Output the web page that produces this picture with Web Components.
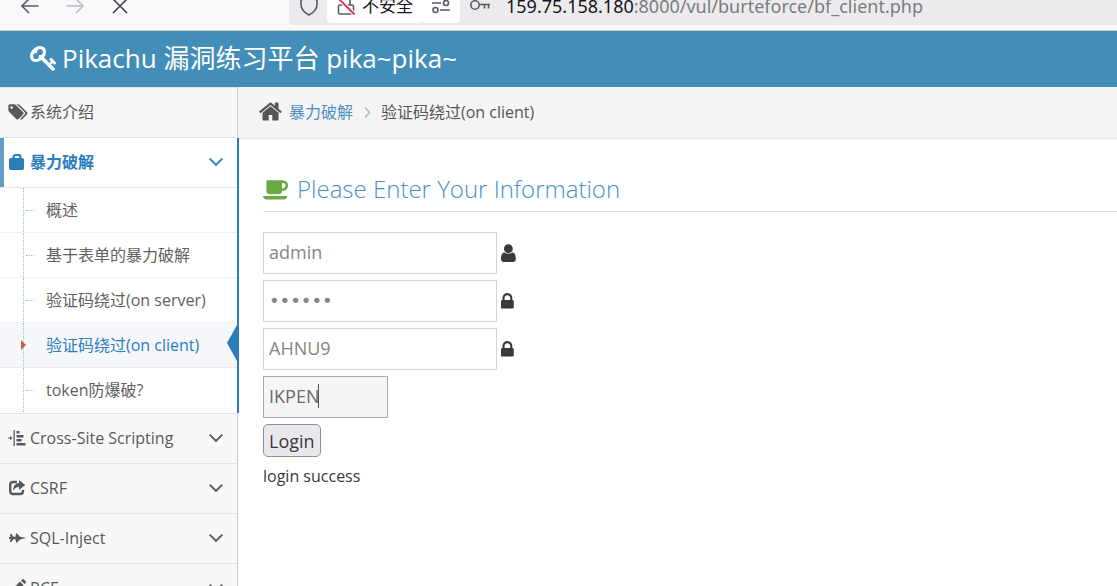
<!DOCTYPE html>
<html lang="zh-CN">
<head>
<meta charset="utf-8">
<title>Pikachu 漏洞练习平台 pika~pika~</title>
<style>
html,body{margin:0;height:100%}
body{overflow:hidden;background:#fff;color:#393939;font:16px/24px "Open Sans","Noto Sans CJK SC",sans-serif}
</style>
</head>
<body>
<pika-app></pika-app>
<script>
const ICONS = {
  key:['0 0 1792 1792','<path d="M832 512q0-80-56-136t-136-56-136 56-56 136q0 42 19 83-41-19-83-19-80 0-136 56t-56 136 56 136 136 56 136-56 56-136q0-42-19-83 41 19 83 19 80 0 136-56t56-136zm851 704q0 17-49 66t-66 49q-9 0-28.500-16t-36.500-33-38.500-40-24.500-26l-96 96 220 220q28 28 28 68 0 42-39 81t-81 39q-40 0-68-28l-671-671q-176 131-365 131-163 0-265.500-102.500t-102.500-265.500q0-160 95-313t248-248 313-95q163 0 265.500 102.500t102.500 265.500q0 189-131 365l355 355 96-96q-3-3-26-24.500t-40-38.500-33-36.500-16-28.500q0-17 49-66t66-49q13 0 23 10 6 6 46 44.500t82 79.500 86.500 86 73 78 28.500 41z"/>'],
  tags:['0 0 1920 1792','<path d="M384 448q0-53-37.500-90.500t-90.500-37.500-90.500 37.500-37.500 90.500 37.500 90.500 90.500 37.500 90.500-37.500 37.500-90.500zm1067 576q0 53-37 90l-491 492q-39 37-91 37-53 0-90-37l-715-716q-38-37-64.500-101t-26.500-117v-416q0-52 38-90t90-38h416q53 0 117 26.500t102 64.500l715 714q37 39 37 91zm384 0q0 53-37 90l-491 492q-39 37-91 37-36 0-59-14t-53-45l470-470q37-37 37-90 0-52-37-91l-715-714q-38-38-102-64.500t-117-26.500h224q53 0 117 26.500t102 64.500l715 714q37 39 37 91z"/>'],
  home:['0 0 1792 1792','<path d="M1472 992v480q0 26-19 45t-45 19h-384v-384h-256v384h-384q-26 0-45-19t-19-45v-480q0-1 .5-3t.5-3l575-474 575 474q1 2 1 6zm223-69l-62 74q-8 9-21 11h-3q-13 0-21-7l-692-577-692 577q-12 8-24 7-13-2-21-11l-62-74q-8-10-7-23.500t11-21.500l719-599q32-26 76-26t76 26l244 204v-195q0-14 9-23t23-9h192q14 0 23 9t9 23v408l219 182q10 8 11 21.500t-7 23.500z"/>'],
  coffee:['0 0 1920 1792','<path d="M1664 640q0-80-56-136t-136-56h-64v384h64q80 0 136-56t56-136zm-1664 768h1792q0 106-75 181t-181 75h-1280q-106 0-181-75t-75-181zm1856-768q0 159-112.500 271.500t-271.500 112.500h-64v32q0 92-66 158t-158 66h-704q-92 0-158-66t-66-158v-736q0-26 19-45t45-19h1152q159 0 271.500 112.500t112.500 271.500z"/>'],
  user:['256 192 1280 1472','<path d="M1536 1399q0 109-62.500 187t-150.500 78h-854q-88 0-150.500-78t-62.500-187q0-85 8.500-160.500t31.500-152 58.500-131 94-89 134.500-34.500q131 128 313 128t313-128q76 0 134.500 34.500t94 89 58.500 131 31.500 152 8.500 160.500zm-256-887q0 159-112.500 271.500t-271.500 112.500-271.500-112.500-112.500-271.500 112.500-271.500 271.500-112.500 271.500 112.500 112.500 271.500z"/>'],
  lock:['320 128 1152 1536','<path d="M640 768h512v-192q0-106-75-181t-181-75-181 75-75 181v192zm832 96v576q0 40-28 68t-68 28h-960q-40 0-68-28t-28-68v-576q0-40 28-68t68-28h32v-192q0-184 132-316t316-132 316 132 132 316v192h32q40 0 68 28t28 68z"/>'],
  bag:['0 0 18 18','<path fill-rule="evenodd" d="M3.500 5V4q0-3 3-3h3q3 0 3 3v1h1q1.500 0 1.500 2v8q0 2-1.500 2h-12Q0 17 0 15V7q0-2 1.500-2zm2.200 0h4.600v-.8q0-1.200-1.200-1.200H6.900q-1.200 0-1.200 1.200z"/>'],
  indent:['0 0 18 18','<path d="M4.500 1h1.300v16H4.500zM7.500 2h3v2.500h-3zm0 4h7v2.500h-7zm0 4h5v2.500h-5zm0 4h9v2.500h-9zM-1 8.500h2V7l2.500 2L1 11V9.500h-2z"/>'],
  share:['0 0 18 18','<path d="M8 3H4Q1.200 3 1.200 5.800V12Q1.200 15 4 15h7q3 0 3-2.800V11" fill="none" stroke="currentColor" stroke-width="2.400"/><path d="M10 1l6.200 5L10 11V8Q6 8 4.200 12 4 4.600 10 4z"/>'],
  plane:['0 0 18 18','<path d="M1 5h1.500l2 2.800h2L7 4.500h1l3 3.300L17.500 9l-6 1.200L8 13.500H7l-.5-3.300h-2L2.500 13H1l.5-3H0V8h1.500z"/>'],
  pencil:['0 0 18 18','<path d="M11 2.500l3.500 3.500L4.500 16 0 17l1-4.500zM12 1.500l1-1q1-.8 2 0L16.500 2q.8 1 0 2l-1 1z"/>'],
  down:['0 0 14 14','<path d="M1.500 4l5.500 5.500L12.500 4" fill="none" stroke="currentColor" stroke-width="1.600"/>'],
  next:['0 0 14 14','<path d="M5 2.500L9.500 7.500 5 12.500" fill="none" stroke="currentColor" stroke-width="1.500"/>'],
  back:['0 0 20 20','<path d="M18.500 10H2M9 3l-7 7 7 7" fill="none" stroke="currentColor" stroke-width="1.600"/>'],
  forward:['0 0 20 20','<path d="M1.500 10H18M11 3l7 7-7 7" fill="none" stroke="currentColor" stroke-width="1.600"/>'],
  stop:['0 0 20 20','<path d="M3 3l14 14M17 3L3 17" fill="none" stroke="currentColor" stroke-width="1.600"/>'],
  shield:['0 0 20 20','<path d="M10 1L2 4v4q0 7 8 11 8-4 8-11V4z" fill="none" stroke="currentColor" stroke-width="1.600"/>'],
  insecure:['0 0 20 20','<path d="M6 9V5.500Q6 2 10 2t4 3.500V9M4 9h12q1.500 0 1.500 1.500v6Q17.500 18 16 18H4q-1.500 0-1.500-1.500v-6Q2.500 9 4 9z" fill="none" stroke="currentColor" stroke-width="1.600"/><path d="M2 2l16 16" stroke="#fff" stroke-width="4"/><path d="M1 1l17.500 17.500" stroke="#e22850" stroke-width="1.800"/>'],
  sliders:['0 0 20 20','<g fill="none" stroke="currentColor" stroke-width="1.600"><path d="M1 7h9M9 14h10"/><circle cx="15" cy="7" r="2.500"/><circle cx="4.500" cy="14" r="2.500"/></g>'],
  pass:['0 0 20 20','<g fill="none" stroke="currentColor" stroke-width="1.600"><circle cx="5" cy="9" r="4.200"/><path d="M9 8.500h11M14.500 8.500v4M18.500 8.500v4"/></g>']
};

function define(name, html, setup){
  const t = document.createElement('template');
  t.innerHTML = html;
  customElements.define(name, class extends HTMLElement{
    connectedCallback(){
      if(this.shadowRoot) return;
      this.attachShadow({mode:'open'}).append(t.content.cloneNode(true));
      if(setup) setup(this, this.shadowRoot);
    }
  });
}

function icon(name, className = ''){
  const el = document.createElement('ui-icon');
  el.setAttribute('name', name);
  if(className) el.className = className;
  return el;
}

define('ui-icon', `<style>:host{display:block;flex:none;width:18px;height:18px}svg{display:block;width:100%;height:100%;fill:currentColor;overflow:visible}</style>`,
  (el, root) => {
    const [box, body] = ICONS[el.getAttribute('name')];
    root.innerHTML += `<svg viewBox="${box}" preserveAspectRatio="xMinYMid" aria-hidden="true">${body}</svg>`;
  });

define('browser-bar', `<style>
:host{display:flex;align-items:flex-end;height:30px;overflow:hidden;background:#f9f9fb;border-bottom:1px solid #ccc;color:#5b5b66}
button{all:unset;display:flex}
ui-icon{width:20px;height:20px}
.nav{display:flex;gap:25px;padding:0 0 14px 20px;flex:none;width:269px}
.nav button:nth-child(2){color:#bbbbc2}
.nav button:nth-child(3){color:#42424d}
.url{flex:1;display:flex;align-items:center;height:38px;margin-bottom:5px;border-radius:5px 0 0 5px;background:#ebebed;white-space:nowrap}
.url>ui-icon{margin:0 8px 0 10px}
.chip{display:flex;align-items:center;height:34px;padding:0 9px;gap:6px;background:#fff;border-radius:4px;color:#15141a;font-size:17px}
.chip ui-icon{color:#5b5b66}
.addr{font:18px/24px "Noto Sans",sans-serif;color:#7c7c80;margin-left:8px}
b{font-weight:400;color:#15141a}
</style>
<div class="nav"><button aria-label="后退"><ui-icon name="back"></ui-icon></button><button aria-label="前进"><ui-icon name="forward"></ui-icon></button><button aria-label="停止"><ui-icon name="stop"></ui-icon></button></div>
<div class="url"><ui-icon name="shield"></ui-icon><span class="chip"><ui-icon name="insecure"></ui-icon>不安全</span><span class="chip"><ui-icon name="sliders"></ui-icon></span><ui-icon name="pass"></ui-icon><span class="addr"><b>159.75.158.180</b>:8000/vul/burteforce/bf_client.php</span></div>`);

define('app-header', `<style>
:host{display:flex;align-items:center;height:56px;padding-left:30px;background:#438eb9}
a{display:flex;align-items:center;gap:4px;color:#fff;text-decoration:none;font-size:26px;line-height:34px;padding-bottom:2px}
ui-icon{width:28px;height:28px}
</style><a href="#"><ui-icon name="key"></ui-icon><slot></slot></a>`);

define('nav-item', `<style>
:host{display:block;position:relative;border-bottom:1px solid #e5e5e5;background:#f8f8f8;color:#585858}
a{box-sizing:border-box;display:flex;align-items:center;height:49px;padding:0 13px 2px 9px;gap:1px;color:inherit;text-decoration:none}
.label{flex:1}
a>ui-icon:first-child{width:20px}
:host([open]){background:#fff}
:host([open])>a{height:50px;color:#2b7dbc;font-weight:700;border-bottom:1px solid #e5e5e5;box-shadow:inset 4px 0 #629cc9}
:host([open])::after{content:"";position:absolute;top:0;right:-2px;bottom:0;width:2px;background:#2b7dbc}
.down{width:16px;height:16px}
</style><a href="#"><span class="label"></span></a><slot></slot>`,
  (el, root) => {
    const link = root.querySelector('a');
    link.prepend(icon(el.getAttribute('icon')));
    root.querySelector('.label').textContent = el.getAttribute('label');
    if(!el.hasAttribute('leaf')) link.append(icon('down', 'down'));
  });

define('nav-subitem', `<style>
:host{display:block;position:relative;border-bottom:1px dotted #e4e4e4;color:#616161}
:host(:last-child){border-bottom-color:transparent}
a{display:flex;align-items:center;height:44px;color:inherit;text-decoration:none}
.tree{align-self:stretch;flex:none;width:23px;border-right:1px dotted #9dbdd6}
.tick{flex:none;width:8px;margin:0 12px 0 2px;border-top:1px dotted #9dbdd6}
:host([active]){background:#f5f7fa;color:#2b7dbc}
:host([active]) .tick{width:0;margin:0 20px 0 -3px;border:solid transparent;border-width:5px 0 5px 5px;border-left-color:#c86139}
:host([active])::after{content:"";position:absolute;right:0;top:2px;width:10px;height:36px;background:#2b7dbc;clip-path:polygon(100% 0,0 50%,100% 100%)}
</style><a href="#"><span class="tree"></span><span class="tick"></span><slot></slot></a>`);

define('side-nav', `<style>:host{display:block;flex:none;width:237px;border-right:1px solid #ccc;background:#f2f2f2}nav{display:block;border-top:1px solid #e5e5e5}</style>
<nav>
<nav-item leaf icon="tags" label="系统介绍"></nav-item>
<nav-item open icon="bag" label="暴力破解"><div>
<nav-subitem>概述</nav-subitem><nav-subitem>基于表单的暴力破解</nav-subitem><nav-subitem>验证码绕过(on server)</nav-subitem><nav-subitem active>验证码绕过(on client)</nav-subitem><nav-subitem>token防爆破?</nav-subitem></div></nav-item>
<nav-item icon="indent" label="Cross-Site Scripting"></nav-item>
<nav-item icon="share" label="CSRF"></nav-item>
<nav-item icon="plane" label="SQL-Inject"></nav-item>
<nav-item icon="pencil" label="RCE"></nav-item>
</nav>`);

define('bread-crumbs', `<style>
:host{box-sizing:border-box;display:flex;align-items:center;height:52px;padding:0 0 2px 20px;background:#f5f5f5;border-bottom:1px solid #e5e5e5;color:#555}
a{color:#4c8fbd;text-decoration:none;margin-left:6px}
.home{width:25px;height:25px}
.sep{width:14px;height:14px;margin:0 7px}
.sep{color:#b2b6bf}
</style><ui-icon class="home" name="home"></ui-icon><a href="#">暴力破解</a><ui-icon class="sep" name="next"></ui-icon><span>验证码绕过(on client)</span>`);

define('login-field', `<style>
:host{display:flex;align-items:center;gap:4px;position:relative;color:#393939}
input{box-sizing:border-box;width:234px;height:42px;margin:0;padding:0 5px 2px;border:1px solid #d5d5d5;border-radius:0;background:#fff;color:#858585;font:18px/24px "Open Sans","Noto Sans CJK SC",sans-serif;outline:0}
input[type=password]{font-family:"DejaVu Sans",sans-serif}
:host([focused]) input{width:125px;background:#f5f5f5;border-color:#aaa;color:#696969}
:host([focused])::after{content:"";position:absolute;left:55px;top:8px;width:1px;height:24px;background:#555}
ui-icon{width:16px;height:17px}
</style><input>`,
  (el, root) => {
    const i = root.querySelector('input');
    i.type = el.getAttribute('type') || 'text';
    i.value = el.getAttribute('value');
    i.setAttribute('aria-label', el.getAttribute('label'));
    if(el.hasAttribute('icon')) root.append(icon(el.getAttribute('icon')));
  });

define('login-form', `<style>
:host{display:block;padding:32px 0 0 25px}
h4{box-sizing:border-box;display:flex;align-items:center;gap:8px;margin:0 0 20px;height:41px;padding-bottom:4px;border-bottom:1px solid #dce0e6;color:#478fca;font-size:24px;line-height:32px;font-weight:300}
h4 ui-icon{width:26px;height:26px;color:#69aa46}
form{display:flex;flex-direction:column;align-items:flex-start;gap:6px}
button{box-sizing:border-box;height:33px;padding:0 5px;border:1px solid #8f8f9d;border-radius:5px;background:#e9e9ed;color:#393939;font:18px/24px "Open Sans",sans-serif}
p{margin:7px 0 0}
</style>
<h4><ui-icon name="coffee"></ui-icon>Please Enter Your Information</h4>
<form>
<login-field label="Username" value="admin" icon="user"></login-field>
<login-field label="Password" type="password" value="123456" icon="lock"></login-field>
<login-field label="验证码" value="AHNU9" icon="lock"></login-field>
<login-field label="验证码图片" value="IKPEN" focused></login-field>
<button type="button">Login</button>
</form>
<p>login success</p>`);

define('pika-app', `<style>
:host{display:flex;flex-direction:column;min-height:100vh}
.body{display:flex;flex:1}
main{flex:1;min-width:0}
</style>
<browser-bar></browser-bar>
<app-header>Pikachu 漏洞练习平台 pika~pika~</app-header>
<div class="body"><side-nav></side-nav><main><bread-crumbs></bread-crumbs><login-form></login-form></main></div>`);
</script>
</body>
</html>
